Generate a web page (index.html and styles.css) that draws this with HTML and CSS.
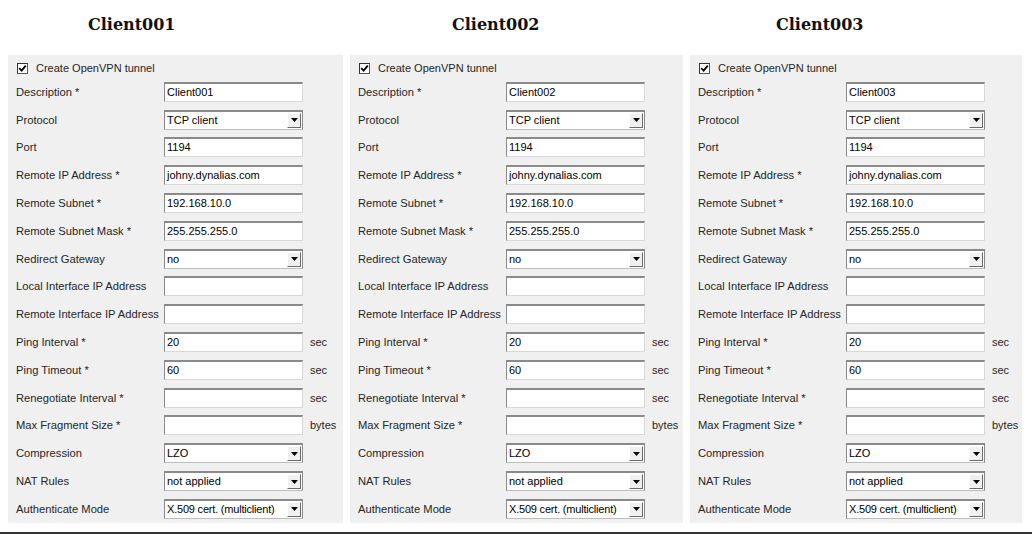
FILE: index.html
```html
<!DOCTYPE html>
<html>
<head>
<meta charset="utf-8">
<link rel="stylesheet" href="styles.css">
</head>
<body>
<div class="page">
  <div class="columns">
    <!-- Column 1 -->
    <section class="column">
      <h2 class="title title-1">Client001</h2>
      <div class="panel">
        <div class="check-row"><span class="checkbox"><svg width="9" height="9" viewBox="0 0 9 9"><path d="M1.2 4.2 L3.6 6.6 L7.8 1.6" fill="none" stroke="#000" stroke-width="1.8"/></svg></span><span>Create OpenVPN tunnel</span></div>
        <div class="fields">
          <span class="label">Description *</span><div class="input">Client001</div><span class="unit"></span>
          <span class="label">Protocol</span><div class="input select"><span>TCP client</span><span class="dd"><svg width="7" height="4" viewBox="0 0 7 4"><polygon points="0,0 7,0 3.5,4" fill="#000"/></svg></span></div><span class="unit"></span>
          <span class="label">Port</span><div class="input">1194</div><span class="unit"></span>
          <span class="label">Remote IP Address *</span><div class="input">johny.dynalias.com</div><span class="unit"></span>
          <span class="label">Remote Subnet *</span><div class="input">192.168.10.0</div><span class="unit"></span>
          <span class="label">Remote Subnet Mask *</span><div class="input">255.255.255.0</div><span class="unit"></span>
          <span class="label">Redirect Gateway</span><div class="input select"><span>no</span><span class="dd"><svg width="7" height="4" viewBox="0 0 7 4"><polygon points="0,0 7,0 3.5,4" fill="#000"/></svg></span></div><span class="unit"></span>
          <span class="label">Local Interface IP Address</span><div class="input"></div><span class="unit"></span>
          <span class="label">Remote Interface IP Address</span><div class="input"></div><span class="unit"></span>
          <span class="label">Ping Interval *</span><div class="input">20</div><span class="unit">sec</span>
          <span class="label">Ping Timeout *</span><div class="input">60</div><span class="unit">sec</span>
          <span class="label">Renegotiate Interval *</span><div class="input"></div><span class="unit">sec</span>
          <span class="label">Max Fragment Size *</span><div class="input"></div><span class="unit">bytes</span>
          <span class="label">Compression</span><div class="input select"><span>LZO</span><span class="dd"><svg width="7" height="4" viewBox="0 0 7 4"><polygon points="0,0 7,0 3.5,4" fill="#000"/></svg></span></div><span class="unit"></span>
          <span class="label">NAT Rules</span><div class="input select"><span>not applied</span><span class="dd"><svg width="7" height="4" viewBox="0 0 7 4"><polygon points="0,0 7,0 3.5,4" fill="#000"/></svg></span></div><span class="unit"></span>
          <span class="label">Authenticate Mode</span><div class="input select"><span class="narrow">X.509 cert. (multiclient)</span><span class="dd"><svg width="7" height="4" viewBox="0 0 7 4"><polygon points="0,0 7,0 3.5,4" fill="#000"/></svg></span></div><span class="unit"></span>
        </div>
      </div>
    </section>
    <!-- Column 2 -->
    <section class="column">
      <h2 class="title title-2">Client002</h2>
      <div class="panel">
        <div class="check-row"><span class="checkbox"><svg width="9" height="9" viewBox="0 0 9 9"><path d="M1.2 4.2 L3.6 6.6 L7.8 1.6" fill="none" stroke="#000" stroke-width="1.8"/></svg></span><span>Create OpenVPN tunnel</span></div>
        <div class="fields">
          <span class="label">Description *</span><div class="input">Client002</div><span class="unit"></span>
          <span class="label">Protocol</span><div class="input select"><span>TCP client</span><span class="dd"><svg width="7" height="4" viewBox="0 0 7 4"><polygon points="0,0 7,0 3.5,4" fill="#000"/></svg></span></div><span class="unit"></span>
          <span class="label">Port</span><div class="input">1194</div><span class="unit"></span>
          <span class="label">Remote IP Address *</span><div class="input">johny.dynalias.com</div><span class="unit"></span>
          <span class="label">Remote Subnet *</span><div class="input">192.168.10.0</div><span class="unit"></span>
          <span class="label">Remote Subnet Mask *</span><div class="input">255.255.255.0</div><span class="unit"></span>
          <span class="label">Redirect Gateway</span><div class="input select"><span>no</span><span class="dd"><svg width="7" height="4" viewBox="0 0 7 4"><polygon points="0,0 7,0 3.5,4" fill="#000"/></svg></span></div><span class="unit"></span>
          <span class="label">Local Interface IP Address</span><div class="input"></div><span class="unit"></span>
          <span class="label">Remote Interface IP Address</span><div class="input"></div><span class="unit"></span>
          <span class="label">Ping Interval *</span><div class="input">20</div><span class="unit">sec</span>
          <span class="label">Ping Timeout *</span><div class="input">60</div><span class="unit">sec</span>
          <span class="label">Renegotiate Interval *</span><div class="input"></div><span class="unit">sec</span>
          <span class="label">Max Fragment Size *</span><div class="input"></div><span class="unit">bytes</span>
          <span class="label">Compression</span><div class="input select"><span>LZO</span><span class="dd"><svg width="7" height="4" viewBox="0 0 7 4"><polygon points="0,0 7,0 3.5,4" fill="#000"/></svg></span></div><span class="unit"></span>
          <span class="label">NAT Rules</span><div class="input select"><span>not applied</span><span class="dd"><svg width="7" height="4" viewBox="0 0 7 4"><polygon points="0,0 7,0 3.5,4" fill="#000"/></svg></span></div><span class="unit"></span>
          <span class="label">Authenticate Mode</span><div class="input select"><span class="narrow">X.509 cert. (multiclient)</span><span class="dd"><svg width="7" height="4" viewBox="0 0 7 4"><polygon points="0,0 7,0 3.5,4" fill="#000"/></svg></span></div><span class="unit"></span>
        </div>
      </div>
    </section>
    <!-- Column 3 -->
    <section class="column">
      <h2 class="title title-3">Client003</h2>
      <div class="panel">
        <div class="check-row"><span class="checkbox"><svg width="9" height="9" viewBox="0 0 9 9"><path d="M1.2 4.2 L3.6 6.6 L7.8 1.6" fill="none" stroke="#000" stroke-width="1.8"/></svg></span><span>Create OpenVPN tunnel</span></div>
        <div class="fields">
          <span class="label">Description *</span><div class="input">Client003</div><span class="unit"></span>
          <span class="label">Protocol</span><div class="input select"><span>TCP client</span><span class="dd"><svg width="7" height="4" viewBox="0 0 7 4"><polygon points="0,0 7,0 3.5,4" fill="#000"/></svg></span></div><span class="unit"></span>
          <span class="label">Port</span><div class="input">1194</div><span class="unit"></span>
          <span class="label">Remote IP Address *</span><div class="input">johny.dynalias.com</div><span class="unit"></span>
          <span class="label">Remote Subnet *</span><div class="input">192.168.10.0</div><span class="unit"></span>
          <span class="label">Remote Subnet Mask *</span><div class="input">255.255.255.0</div><span class="unit"></span>
          <span class="label">Redirect Gateway</span><div class="input select"><span>no</span><span class="dd"><svg width="7" height="4" viewBox="0 0 7 4"><polygon points="0,0 7,0 3.5,4" fill="#000"/></svg></span></div><span class="unit"></span>
          <span class="label">Local Interface IP Address</span><div class="input"></div><span class="unit"></span>
          <span class="label">Remote Interface IP Address</span><div class="input"></div><span class="unit"></span>
          <span class="label">Ping Interval *</span><div class="input">20</div><span class="unit">sec</span>
          <span class="label">Ping Timeout *</span><div class="input">60</div><span class="unit">sec</span>
          <span class="label">Renegotiate Interval *</span><div class="input"></div><span class="unit">sec</span>
          <span class="label">Max Fragment Size *</span><div class="input"></div><span class="unit">bytes</span>
          <span class="label">Compression</span><div class="input select"><span>LZO</span><span class="dd"><svg width="7" height="4" viewBox="0 0 7 4"><polygon points="0,0 7,0 3.5,4" fill="#000"/></svg></span></div><span class="unit"></span>
          <span class="label">NAT Rules</span><div class="input select"><span>not applied</span><span class="dd"><svg width="7" height="4" viewBox="0 0 7 4"><polygon points="0,0 7,0 3.5,4" fill="#000"/></svg></span></div><span class="unit"></span>
          <span class="label">Authenticate Mode</span><div class="input select"><span class="narrow">X.509 cert. (multiclient)</span><span class="dd"><svg width="7" height="4" viewBox="0 0 7 4"><polygon points="0,0 7,0 3.5,4" fill="#000"/></svg></span></div><span class="unit"></span>
        </div>
      </div>
    </section>
  </div>
  <div class="footer"></div>
</div>
</body>
</html>
```

FILE: styles.css
```css
* { box-sizing: border-box; }

html, body {
  margin: 0;
  background: #ffffff;
}

body {
  width: 1032px;
  height: 534px;
  overflow: hidden;
  font-family: "Liberation Sans", Arial, sans-serif;
  color: #262626;
}

.page {
  display: flex;
  flex-direction: column;
  height: 534px;
}

.columns {
  display: grid;
  grid-template-columns: 335px 333px 332px;
  column-gap: 7px;
  padding-left: 8px;
}

.column {
  display: flex;
  flex-direction: column;
}

.title {
  height: 55px;
  margin: 0;
  padding-top: 15px;
  font-family: "DejaVu Serif", serif;
  font-weight: bold;
  font-size: 16px;
  line-height: 20px;
  color: #111;
}

.title-1 { padding-left: 80px; }
.title-2 { padding-left: 102px; }
.title-3 { padding-left: 86px; }

.panel {
  background: #f0f0f0;
  padding: 3px 0 0 8px;
}

.check-row {
  height: 20px;
  display: flex;
  align-items: center;
  gap: 8px;
  padding-left: 1px;
  font-size: 11px;
}

.checkbox {
  width: 11px;
  height: 11px;
  border: 1px solid #555;
  border-top-color: #333;
  border-left-color: #333;
  background: #fff;
  display: flex;
  align-items: center;
  justify-content: center;
}

.fields {
  display: grid;
  grid-template-columns: 148px 139px auto;
  grid-auto-rows: 27.8px;
  align-items: center;
}

.label {
  font-size: 11.2px;
  white-space: nowrap;
}

.input {
  height: 20px;
  background: #fff;
  border-top: 2px solid #8a8a8a;
  border-left: 1px solid #8a8a8a;
  border-right: 1px solid #d8d8d8;
  border-bottom: 1px solid #d8d8d8;
  font-size: 11px;
  line-height: 17px;
  padding-left: 2px;
  color: #000;
  white-space: nowrap;
  overflow: hidden;
}

.select {
  display: flex;
  align-items: center;
  justify-content: space-between;
  padding-right: 1px;
  border-right-color: #8a8a8a;
  border-bottom-color: #bdbdbd;
}

.narrow {
  letter-spacing: -0.2px;
}

.dd {
  flex: none;
  width: 14px;
  height: 15px;
  background: #f0f0f0;
  border: 1px solid;
  border-color: #fff #6a6a6a #6a6a6a #fff;
  display: flex;
  align-items: center;
  justify-content: center;
}

.unit {
  font-size: 11px;
  padding-left: 7px;
}

.footer {
  margin-top: auto;
  height: 2px;
  background: #333;
}
```
